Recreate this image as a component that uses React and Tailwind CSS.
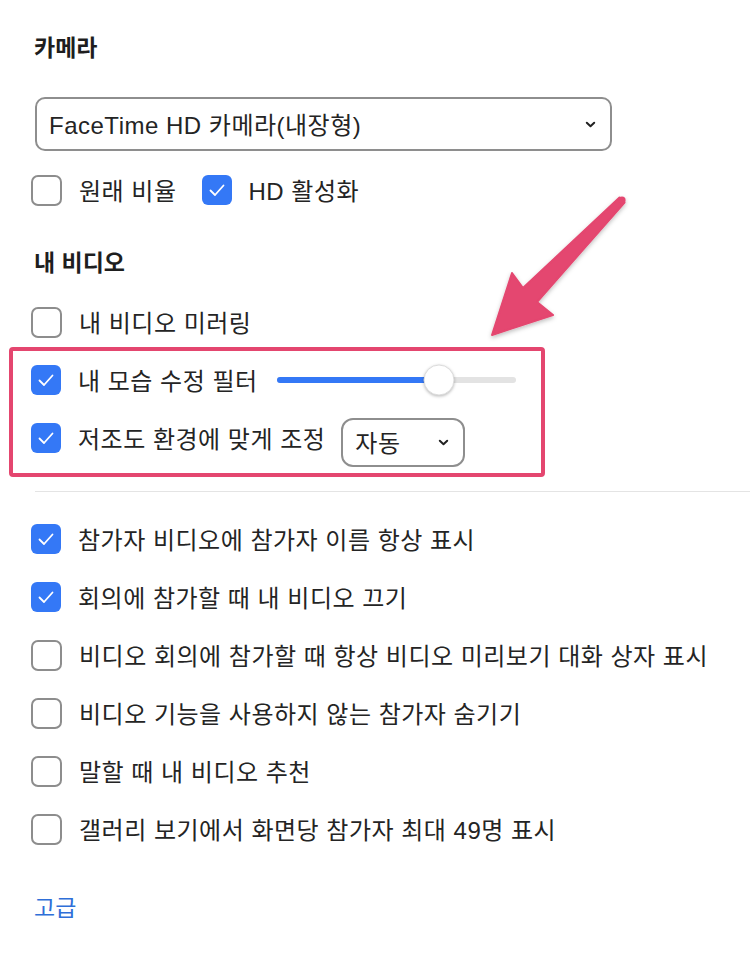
// App.jsx

import React from 'react';

const font = { fontFamily: '"Liberation Sans", "Noto Sans CJK KR", sans-serif' };

function Check({ checked }) {
  if (checked) {
    return (
      <span className="flex h-[30px] w-[30px] shrink-0 items-center justify-center rounded-[6px] bg-[#3478f6]">
        <svg width="20" height="20" viewBox="0 0 20 20" fill="none">
          <path d="M3.5 10.5l4.5 4.5L16.5 5.5" stroke="#fff" strokeWidth="1.8" strokeLinecap="round" strokeLinejoin="round" />
        </svg>
      </span>
    );
  }
  return <span className="block h-[31px] w-[31px] shrink-0 rounded-[7px] border-2 border-[#8d8d8d] bg-white" />;
}

function Row({ checked, label, children }) {
  return (
    <div className="flex h-[30px] items-center">
      <Check checked={checked} />
      <span className="ml-[17px] pt-[4px] text-[24px] leading-none tracking-[0.5px] text-[#242424]">{label}</span>
      {children}
    </div>
  );
}

function Chevron() {
  return (
    <svg width="11" height="7" viewBox="0 0 11 7" fill="none">
      <path d="M1.8 1.8l3.7 3.5 3.7-3.5" stroke="#222" strokeWidth="2" strokeLinecap="round" strokeLinejoin="round" />
    </svg>
  );
}

function Arrow() {
  return (
    <svg className="pointer-events-none absolute left-0 top-0" width="750" height="956" viewBox="0 0 750 956">
      <defs>
        <filter id="sh" x="-20%" y="-20%" width="140%" height="140%">
          <feDropShadow dx="0" dy="2" stdDeviation="2" floodColor="#000" floodOpacity="0.25" />
        </filter>
      </defs>
      <g filter="url(#sh)" fill="#e4466f">
        <polygon points="619.5,197.5 624.5,202.5 537,302 553,315 492,335 512,273 523,288" strokeLinejoin="round" stroke="#e4466f" strokeWidth="2" />
        <circle cx="622" cy="200" r="3.6" />
      </g>
    </svg>
  );
}

const videoOptions = [
  { checked: true, label: '참가자 비디오에 참가자 이름 항상 표시' },
  { checked: true, label: '회의에 참가할 때 내 비디오 끄기' },
  { checked: false, label: '비디오 회의에 참가할 때 항상 비디오 미리보기 대화 상자 표시' },
  { checked: false, label: '비디오 기능을 사용하지 않는 참가자 숨기기' },
  { checked: false, label: '말할 때 내 비디오 추천' },
  { checked: false, label: '갤러리 보기에서 화면당 참가자 최대 49명 표시' },
];

export default function App() {
  const level = 68;

  return (
    <div className="relative h-[956px] w-[750px] overflow-hidden bg-white" style={font}>
      <div className="flex flex-col pl-[31px]">
        <h2 className="mt-[33px] flex h-[30px] items-center pl-[3px] text-[23px] font-bold text-[#1e1e1e]">카메라</h2>

        <div className="ml-[4px] mt-[34px] flex h-[54px] w-[577px] items-center justify-between rounded-[10px] border-2 border-[#8e8e8e] pl-[12px] pr-[14px]">
          <span className="pt-[3px] text-[24px] tracking-[0.5px] text-[#242424]">FaceTime HD 카메라(내장형)</span>
          <Chevron />
        </div>

        <div className="mt-[24px] flex h-[30px] items-center">
          <Row checked={false} label="원래 비율" />
          <div className="ml-[25px]">
            <Row checked label="HD 활성화" />
          </div>
        </div>

        <h2 className="mt-[43px] flex h-[30px] items-center pl-[3px] text-[23px] font-bold text-[#1e1e1e]">내 비디오</h2>

        <div className="mt-[29px]">
          <Row checked={false} label="내 비디오 미러링" />
        </div>

        <div className="-ml-[22px] mt-[10px] flex w-[536px] flex-col rounded-[4px] border-4 border-[#e4466f] pb-[10px] pl-[18px] pt-[14px]">
          <Row checked label="내 모습 수정 필터">
            <div className="relative ml-[19px] h-[6px] w-[239px] rounded-full bg-[#e3e3e3]">
              <div className="h-full rounded-full bg-[#3478f6]" style={{ width: `${level}%` }} />
              <span
                className="absolute top-1/2 h-[31px] w-[31px] -translate-x-1/2 -translate-y-1/2 rounded-full border border-[#dcdcdc] bg-white shadow-[0_1px_3px_rgba(0,0,0,0.25)]"
                style={{ left: `${level}%` }}
              />
            </div>
          </Row>
          <div className="mt-[18px] flex h-[50px] items-center">
            <Row checked label="저조도 환경에 맞게 조정" />
            <div className="ml-[16px] flex h-[49px] w-[124px] translate-y-[4px] items-center justify-between rounded-[12px] border-2 border-[#8e8e8e] pl-[12px] pr-[14px]">
              <span className="pt-[3px] text-[24px] tracking-[0.5px] text-[#242424]">자동</span>
              <Chevron />
            </div>
          </div>
        </div>

        <div className="ml-[4px] mt-[14px] h-px bg-[#e4e4e4]" />

        <div className="mt-[32px] flex flex-col gap-[28px]">
          {videoOptions.map((opt, i) => (
            <Row key={i} checked={opt.checked} label={opt.label} />
          ))}
        </div>

        <a className="mt-[49px] flex h-[30px] items-center pl-[3px] text-[23px] text-[#2f6fd8]">고급</a>
      </div>
      <Arrow />
    </div>
  );
}
